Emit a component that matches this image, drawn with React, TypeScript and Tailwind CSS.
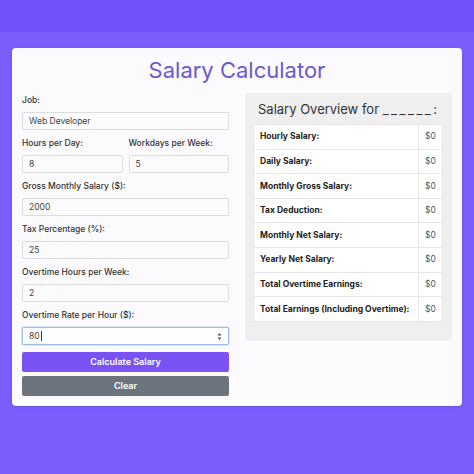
import React from "react";

const fields = [
  { label: "Gross Monthly Salary ($):", value: "2000" },
  { label: "Tax Percentage (%):", value: "25" },
  { label: "Overtime Hours per Week:", value: "2" },
];

const rows = [
  "Hourly Salary:",
  "Daily Salary:",
  "Monthly Gross Salary:",
  "Tax Deduction:",
  "Monthly Net Salary:",
  "Yearly Net Salary:",
  "Total Overtime Earnings:",
  "Total Earnings (Including Overtime):",
];

function Label({ children }: { children: React.ReactNode }) {
  return (
    <div className="mb-[6px] h-[12px] text-[8.5px] leading-[12px] font-medium text-[#333]">
      {children}
    </div>
  );
}

function Box({ value }: { value: string }) {
  return (
    <div className="mb-[7px] flex h-[18px] items-center rounded-[2px] border border-[#dcdcdc] bg-[#fbfbfb] px-[6px] text-[8.5px] text-[#444]">
      {value}
    </div>
  );
}

export default function App() {
  return (
    <div
      className="h-[474px] w-[474px] bg-[#7b5cfd]"
      style={{ fontFamily: "Inter, 'Open Sans', sans-serif" }}>
      <div className="h-8 bg-[#7452fa]" />
      <div className="px-3 pt-4">
        <div className="rounded-[4px] bg-[#fbfafd] px-[10px] pt-[7px] pb-[10px] shadow-sm">
          <h1 className="mb-2 text-center text-[22px] leading-[30px] text-[#6a5acd]">
            Salary Calculator
          </h1>

          <div className="grid grid-cols-2 gap-4">
            {/* form side */}
            <div className="pt-px">
              <Label>Job:</Label>
              <Box value="Web Developer" />

              <div className="grid grid-cols-2 gap-[6px]">
                <div>
                  <Label>Hours per Day:</Label>
                  <Box value="8" />
                </div>
                <div>
                  <Label>Workdays per Week:</Label>
                  <Box value="5" />
                </div>
              </div>

              {fields.map((f) => (
                <div key={f.label}>
                  <Label>{f.label}</Label>
                  <Box value={f.value} />
                </div>
              ))}

              <Label>Overtime Rate per Hour ($):</Label>
              <div className="mb-[7px] flex h-[18px] items-center rounded-[2px] border border-[#9fbde6] bg-white px-[6px] text-[8.5px] text-[#444] shadow-[0_0_0_1px_#d6e4f7]">
                <span>80</span>
                <span className="ml-px h-[10px] w-px bg-[#333]" />
                <svg className="ml-auto" width="5" height="9" viewBox="0 0 5 9">
                  <path d="M0.5 3.5 L2.5 1 L4.5 3.5 Z M0.5 5.5 L2.5 8 L4.5 5.5 Z" fill="#555" />
                </svg>
              </div>

              <button className="mb-1 flex h-5 w-full items-center justify-center rounded-[2px] bg-[#7b52f4] text-[9px] font-semibold text-white">
                Calculate Salary
              </button>
              <button className="flex h-5 w-full items-center justify-center rounded-[2px] bg-[#6c757d] text-[9px] font-semibold text-white">
                Clear
              </button>
            </div>

            {/* overview side */}
            <div className="self-start rounded-[4px] bg-[#efefef] pt-[6px] pr-[9px] pb-[19px] pl-[8px]">
              <h2 className="mb-[5px] pl-[5px] text-[13px] leading-[20px] text-[#333]">
                Salary Overview for{" "}
                <span className="tracking-[2.5px]">______</span>:
              </h2>
              <table className="w-full border-collapse bg-white">
                <tbody>
                  {rows.map((r) => (
                    <tr key={r} className="h-[24.6px] border border-[#e6e6e6]">
                      <td className="border border-[#e6e6e6] pl-[6px] text-[8.5px] font-bold text-[#222]">
                        {r}
                      </td>
                      <td className="w-[24px] border border-[#e6e6e6] pl-[6px] text-[8.5px] text-[#555]">
                        $0
                      </td>
                    </tr>
                  ))}
                </tbody>
              </table>
            </div>
          </div>
        </div>
      </div>
    </div>
  );
}
